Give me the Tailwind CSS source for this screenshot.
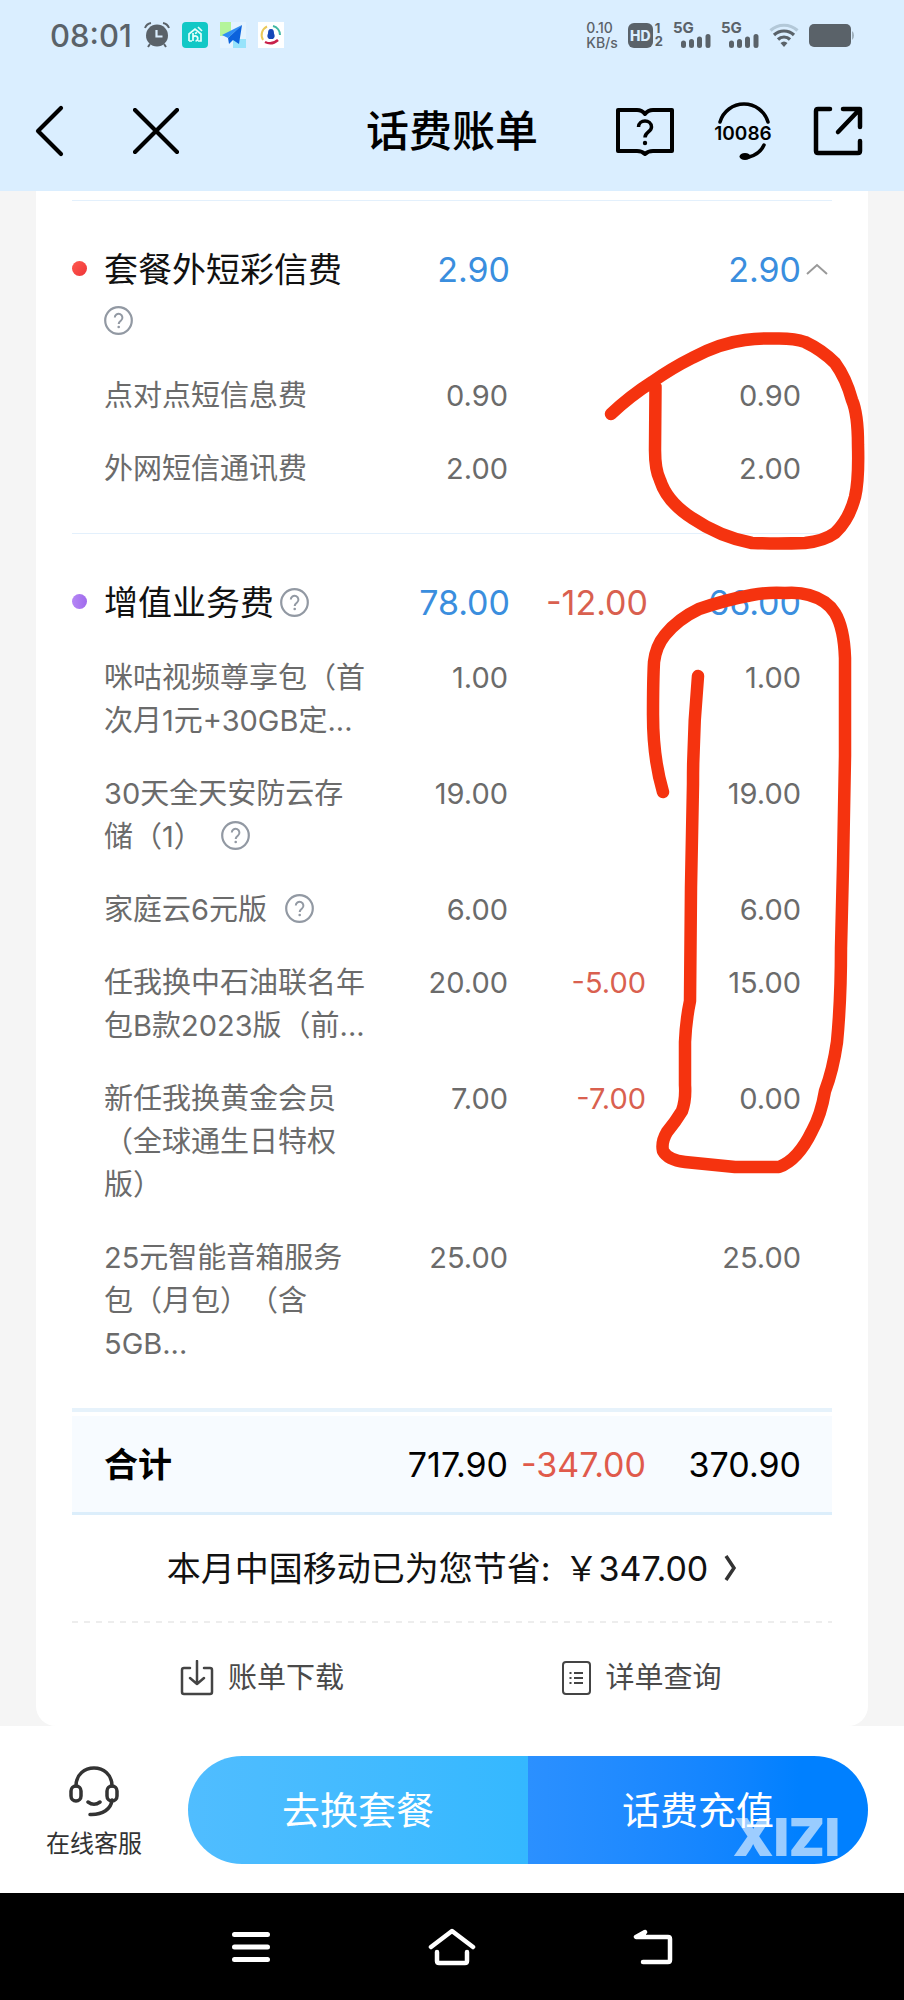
<!DOCTYPE html>
<html lang="zh-CN">
<head>
  <meta charset="UTF-8">
  <meta name="viewport" content="width=device-width, initial-scale=1.0">
  <title>话费账单</title>
  <script src="https://cdn.jsdelivr.net/npm/@tailwindcss/browser@4"></script>
</head>
<body class="relative flex min-h-screen flex-col bg-[#f5f5f5] font-['Inter','Noto_Sans_CJK_SC',sans-serif] [text-spacing-trim:space-all]">

  <!-- Shared icons -->
  <svg class="hidden">
    <symbol id="help" viewBox="0 0 29 29">
      <circle cx="14.5" cy="14.5" r="13.3" fill="none" stroke="#9299a3" stroke-width="2.2"/>
      <path d="M10.8 11.6a3.8 3.8 0 1 1 6.2 2.9c-1.6 1.2-2.3 1.8-2.3 3.6" fill="none" stroke="#9299a3" stroke-width="2"/>
      <circle cx="14.7" cy="21" r="1.3" fill="#9299a3"/>
    </symbol>
    <symbol id="signal" viewBox="0 0 30 14">
      <path d="M2.5 9v2.500M10.500 7.500v4M18.500 5v6.500M27 2.500v9" fill="none" stroke="#5a6269" stroke-width="5" stroke-linecap="round"/>
    </symbol>
  </svg>

  <header class="h-[191px] bg-[#daeeff]">
    <!-- Status bar -->
    <div class="flex h-[70px] items-center justify-between px-[50px] text-[#5a6269]">
      <div class="flex items-center gap-3">
        <span class="text-[31px] font-medium leading-none">08:01</span>
        <svg class="h-[26px] w-[26px]" viewBox="0 0 26 26">
          <circle cx="13" cy="13.500" r="11" fill="#5a6269"/>
          <path d="M1 6a8 8 0 0 1 6-5M25 6a8 8 0 0 0-6-5M6 22l-2 3M20 22l2 3" fill="none" stroke="#5a6269" stroke-width="2"/>
          <path d="M12.500 8v6.500h6" fill="none" stroke="#daeeff" stroke-width="2.200"/>
        </svg>
        <svg class="h-[26px] w-[26px]" viewBox="0 0 26 26">
          <rect width="26" height="26" rx="4" fill="#12c8c6"/>
          <path d="M7 19v-7l6-5 6 5v7h-3M7 19h3M11 11v8M11 15.500a2.500 2.500 0 1 1 2.500 3.500M13 11.500l2-1M16 5l4 4" fill="none" stroke="#e6fffb" stroke-width="1.700"/>
        </svg>
        <svg class="h-[26px] w-[26px]" viewBox="0 0 26 26">
          <rect width="26" height="26" fill="#e4f3ff"/>
          <rect width="11" height="14" fill="#b4f49a"/>
          <rect x="13" y="17" width="13" height="9" fill="#97e3fb"/>
          <path d="M22 3L2 13l6 3z" fill="#2d8df5"/>
          <path d="M22 3L8 16l1 6 4-4 6 4z" fill="#0b62dc"/>
        </svg>
        <svg class="h-[26px] w-[26px]" viewBox="0 0 26 26">
          <rect width="26" height="26" fill="#fff"/>
          <path d="M9 4.500A9.500 9.500 0 0 0 5 18" fill="none" stroke="#eac95a" stroke-width="2"/>
          <path d="M15 4a9 9 0 0 1 7 9" fill="none" stroke="#40b8a4" stroke-width="2"/>
          <path d="M7 20c4 2 9 1.500 13-2" fill="none" stroke="#c8204a" stroke-width="2.500"/>
          <path d="M13 7c2.500 0 3 2 3 4.500 1 2 1 4-1 5.500h-4c-2-1.500-2-3.500-1-5.500C10 9 10.500 7 13 7z" fill="#1647b8"/>
        </svg>
      </div>

      <div class="flex items-center gap-[10px]">
        <div class="text-[14px] font-medium">
          <div class="leading-[15px]">0.10</div>
          <div class="leading-[15px]">KB/s</div>
        </div>
        <div class="flex items-center gap-[2px]">
          <span class="flex h-[25px] w-[25px] items-center justify-center rounded-md bg-[#5a6269] text-[14px] font-extrabold text-[#daeeff]">HD</span>
          <span class="text-[13px] font-bold leading-[13px]">1<br>2</span>
        </div>
        <div class="flex w-[38px] flex-col">
          <span class="text-[15px] font-bold leading-[12px]">5G</span>
          <svg class="h-[14px] w-[30px] self-end"><use href="#signal"/></svg>
        </div>
        <div class="flex w-[38px] flex-col">
          <span class="text-[15px] font-bold leading-[12px]">5G</span>
          <svg class="h-[14px] w-[30px] self-end"><use href="#signal"/></svg>
        </div>
        <svg class="h-[24px] w-[30px]" viewBox="0 0 30 24" fill="none" stroke-width="3.200">
          <path d="M1.500 7.500a20 20 0 0 1 27 0" stroke="#b3c8d8"/>
          <path d="M5 12a14.500 14.500 0 0 1 20 0M9 16.500a8.500 8.500 0 0 1 12 0" stroke="#5a6269"/>
          <path d="M11.500 20q3.500-3 7 0L15 24z" fill="#5a6269"/>
        </svg>
        <svg class="h-[23px] w-[45px]" viewBox="0 0 45 23">
          <rect width="42" height="23" rx="5" fill="#5a6269"/>
          <path d="M43 7q2 1 2 4.500T43 16z" fill="#9fb0bd"/>
        </svg>
      </div>
    </div>

    <!-- App bar -->
    <nav class="grid h-[122px] grid-cols-[1fr_auto_1fr] items-center px-[35px]">
      <div class="flex items-center gap-[68px]">
        <button aria-label="返回">
          <svg class="h-[52px] w-[30px]" viewBox="0 0 30 52"><path d="M26 3L3 26l23 23" fill="none" stroke="#000" stroke-width="4.200" stroke-linecap="round" stroke-linejoin="round"/></svg>
        </button>
        <button aria-label="关闭">
          <svg class="h-[46px] w-[46px]" viewBox="0 0 46 46"><path d="M2 2l42 42M44 2L2 44" fill="none" stroke="#000" stroke-width="4.200" stroke-linecap="round"/></svg>
        </button>
      </div>
      <h1 class="text-[43px] font-medium leading-none text-black">话费账单</h1>
      <div class="flex items-center justify-end gap-[39px] pr-[6px]">
        <button aria-label="帮助">
          <svg class="h-[50px] w-[60px]" viewBox="0 0 60 50" fill="none" stroke="#000" stroke-width="4">
            <path d="M3 4h19q5 0 8 4 3-4 8-4h19v41H38q-5 0-8 3-3-3-8-3H3z" stroke-linejoin="round"/>
            <path d="M23.500 21c0-8 13-8 13 0 0 5-6.500 5-6.500 10.500" stroke-width="3.500"/>
            <circle cx="30" cy="37" r="2.200" fill="#000" stroke="none"/>
          </svg>
        </button>
        <button aria-label="10086 客服">
          <svg class="h-[58px] w-[60px]" viewBox="0 0 60 58">
            <path d="M6 20a25 25 0 0 1 48 0M50 43q-4 9-15 12" fill="none" stroke="#000" stroke-width="3.500" stroke-linecap="round"/>
            <ellipse cx="31" cy="54.500" rx="5.500" ry="3.500" fill="#000"/>
            <text x="29" y="38" text-anchor="middle" class="text-[19px] font-semibold">10086</text>
          </svg>
        </button>
        <button aria-label="分享">
          <svg class="h-[50px] w-[50px]" viewBox="0 0 50 50" fill="none" stroke="#000" stroke-width="4.500" stroke-linecap="round" stroke-linejoin="round">
            <path d="M17 3H5q-2 0-2 2v40q0 2 2 2h40q2 0 2-2V35M30 3h17v18M46 4L25 26"/>
          </svg>
        </button>
      </div>
    </nav>
  </header>

  <main class="mx-9 rounded-b-[20px] bg-white px-9 pt-[9px]">
    <table class="w-full table-fixed border-separate border-spacing-0 text-right text-[29px] leading-[43px] text-[#6b6b6b]">
      <colgroup>
        <col>
        <col class="w-[138px]">
        <col class="w-[138px]">
        <col class="w-[153px]">
        <col class="w-[31px]">
      </colgroup>

      <tbody class="align-top">
        <tr class="text-[34px] leading-[51px] text-[#3a8ede] *:border-t *:border-[#e3f0fc] *:pt-[43px] *:pb-[13px]">
          <th class="text-left font-normal text-[#111]" scope="rowgroup">
            <div class="flex">
              <span class="mt-[17px] mr-[17px] h-[15px] w-[15px] shrink-0 rounded-full bg-linear-to-br from-[#ff5a50] to-[#ee3338]"></span>
              <div>套餐外短彩信费 <button class="align-[-2px]" aria-label="说明"><svg class="h-[29px] w-[29px]"><use href="#help"/></svg></button></div>
            </div>
          </th>
          <td>2.90</td>
          <td></td>
          <td>2.90</td>
          <td>
            <button class="flex h-[49px] w-full items-center justify-center" aria-label="收起">
              <svg class="h-[12px] w-[22px]" viewBox="0 0 22 12"><path d="M1 11L11 2l10 9" fill="none" stroke="#999" stroke-width="2"/></svg>
            </button>
          </td>
        </tr>
        <tr class="*:py-[15px]">
          <th class="pl-8 text-left font-normal" scope="row">点对点短信息费</th>
          <td class="pr-[2px]">0.90</td><td></td><td>0.90</td><td></td>
        </tr>
        <tr class="*:pt-[15px] *:pb-[43px]">
          <th class="pl-8 text-left font-normal" scope="row">外网短信通讯费</th>
          <td class="pr-[2px]">2.00</td><td></td><td>2.00</td><td></td>
        </tr>
      </tbody>

      <tbody class="align-top">
        <tr class="text-[34px] leading-[51px] text-[#3a8ede] *:border-t *:border-[#e3f0fc] *:pt-[43px] *:pb-[13px]">
          <th class="text-left font-normal text-[#111]" scope="rowgroup">
            <div class="flex">
              <span class="mt-[17px] mr-[17px] h-[15px] w-[15px] shrink-0 rounded-full bg-linear-to-r from-[#b586f5] to-[#a06bec]"></span>
              <div>增值业务费<button class="ml-[6px] align-[-2px]" aria-label="说明"><svg class="h-[29px] w-[29px]"><use href="#help"/></svg></button></div>
            </div>
          </th>
          <td>78.00</td>
          <td class="text-[#d9604f]">-12.00</td>
          <td>66.00</td>
          <td></td>
        </tr>
        <tr class="*:py-[15px]">
          <th class="pr-1 pl-8 text-left font-normal" scope="row">咪咕视频尊享包（首次月1元+30GB定...</th>
          <td class="pr-[2px]">1.00</td><td></td><td>1.00</td><td></td>
        </tr>
        <tr class="*:py-[15px]">
          <th class="pr-1 pl-8 text-left font-normal" scope="row">30天全天安防云存储（1）<button class="ml-[18px] align-[-3px]" aria-label="说明"><svg class="h-[29px] w-[29px]"><use href="#help"/></svg></button></th>
          <td class="pr-[2px]">19.00</td><td></td><td>19.00</td><td></td>
        </tr>
        <tr class="*:py-[15px]">
          <th class="pr-1 pl-8 text-left font-normal" scope="row">家庭云6元版<button class="ml-[18px] align-[-3px]" aria-label="说明"><svg class="h-[29px] w-[29px]"><use href="#help"/></svg></button></th>
          <td class="pr-[2px]">6.00</td><td></td><td>6.00</td><td></td>
        </tr>
        <tr class="*:py-[15px]">
          <th class="pr-1 pl-8 text-left font-normal" scope="row">任我换中石油联名年包B款2023版（前...</th>
          <td class="pr-[2px]">20.00</td><td class="pr-[2px] text-[#d9604f]">-5.00</td><td>15.00</td><td></td>
        </tr>
        <tr class="*:py-[15px]">
          <th class="pr-1 pl-8 text-left font-normal" scope="row">新任我换黄金会员（全球通生日特权版）</th>
          <td class="pr-[2px]">7.00</td><td class="pr-[2px] text-[#d9604f]">-7.00</td><td>0.00</td><td></td>
        </tr>
        <tr class="*:border-b-4 *:border-[#e6f2fb] *:pt-[15px] *:pb-[43px]">
          <th class="pr-1 pl-8 text-left font-normal" scope="row">25元智能音箱服务包（月包）（含5GB...</th>
          <td class="pr-[2px]">25.00</td><td></td><td>25.00</td><td></td>
        </tr>
      </tbody>

      <tfoot>
        <tr class="h-[103px] text-[34px] text-black *:border-t-4 *:border-b-3 *:border-t-white *:border-b-[#dceefb] *:bg-[#f7fbff]">
          <th class="pl-8 text-left font-bold" scope="row">合计</th>
          <td class="pr-[2px]">717.90</td>
          <td class="pr-[2px] text-[#e05a4b]">-347.00</td>
          <td>370.90</td>
          <td></td>
        </tr>
      </tfoot>
    </table>

    <a href="#" class="flex h-[106px] items-center justify-center text-[34px] text-[#111]">
      <span>本月中国移动已为您节省:</span>
      <span class="ml-[14px]">￥347.00</span>
      <svg class="ml-4 h-[26px] w-[13px]" viewBox="0 0 13 26"><path d="M2 1l8 12-8 12" fill="none" stroke="#333" stroke-width="3.500"/></svg>
    </a>

    <div class="h-[2px] bg-[repeating-linear-gradient(90deg,#ededed_0_6px,transparent_6px_12px)]"></div>

    <div class="grid h-[103px] grid-cols-2 pt-[6px] text-[29px] text-[#4a4a4a]">
      <a href="#" class="flex items-center justify-center gap-[14px]">
        <svg class="h-[36px] w-[34px]" viewBox="0 0 34 36" fill="none" stroke="#444" stroke-width="2.500" stroke-linecap="round" stroke-linejoin="round">
          <path d="M10 8H4Q2 8 2 10v22q0 2 2 2h26q2 0 2-2V10q0-2-2-2h-6M17 1v23M10 18l7 6 7-6"/>
        </svg>
        账单下载
      </a>
      <a href="#" class="flex items-center justify-center gap-[14px]">
        <svg class="h-[34px] w-[29px]" viewBox="0 0 29 34" fill="none" stroke="#444" stroke-width="2">
          <rect x="1" y="1" width="27" height="32" rx="3"/>
          <path d="M12 12h9M12 17h9M12 22h9M7.500 12h2M7.500 17h2M7.500 22h2"/>
        </svg>
        详单查询
      </a>
    </div>
  </main>

  <!-- Bottom actions -->
  <div class="flex h-[167px] items-start bg-white pt-[30px] pr-9">
    <a href="#" class="flex w-[188px] shrink-0 flex-col items-center pt-[10px] text-[24px] leading-[36px] text-[#333]">
      <svg class="mb-[9px] h-[51px] w-[50px]" viewBox="0 0 50 51" fill="none" stroke="#333" stroke-width="3.500" stroke-linecap="round">
        <path d="M7 20C7-4 43-4 43 20M43 34c-1 9-9 15-22 14.500M19 36q6 4.500 12 0"/>
        <rect x="2" y="20" width="10" height="15" rx="5"/>
        <rect x="38" y="20" width="10" height="15" rx="5"/>
      </svg>
      在线客服
    </a>
    <div class="relative grid h-[108px] flex-1 grid-cols-2 text-[38px] text-white">
      <button class="rounded-l-full bg-linear-to-r from-[#50bdff] to-[#34b8ff]">去换套餐</button>
      <button class="rounded-r-full bg-linear-to-r from-[#2b90ff] to-[#0080ff] to-80%">话费充值</button>
      <span class="pointer-events-none absolute right-[28px] bottom-0 text-[52px] font-black leading-[52px] text-white/60">XIZI</span>
    </div>
  </div>

  <!-- System navigation -->
  <nav class="grid min-h-[106px] flex-1 grid-cols-3 place-items-center bg-black px-[150px]">
    <button aria-label="最近任务">
      <svg class="h-[32px] w-[38px]" viewBox="0 0 38 32"><path d="M2.500 3.500h33M2.500 16h33M2.500 28.500h33" stroke="#fff" stroke-width="5" stroke-linecap="round"/></svg>
    </button>
    <button aria-label="主屏幕">
      <svg class="h-[38px] w-[48px]" viewBox="0 0 48 38" fill="none" stroke="#fff" stroke-width="4.500" stroke-linecap="round" stroke-linejoin="round"><path d="M3 19L24 3l21 16M9 24v9q0 2 2 2h26q2 0 2-2v-9"/></svg>
    </button>
    <button aria-label="返回上一页">
      <svg class="h-[36px] w-[40px]" viewBox="0 0 40 36" fill="none" stroke="#fff" stroke-width="4.500" stroke-linecap="round" stroke-linejoin="round"><path d="M12 3L3 8h32q2 0 2 2v21q0 2-2 2H10"/><path d="M12 3v5H3z" fill="#fff" stroke-width="2"/></svg>
    </button>
  </nav>

  <!-- Hand-drawn marks over the bill -->
  <svg class="pointer-events-none absolute top-0 right-0 h-[1200px] w-[304px]" viewBox="600 0 304 1200" fill="none" stroke="#f5330f" stroke-width="12.500" stroke-linecap="round" stroke-linejoin="round">
    <path d="M611 414Q630 396 652 382Q672 368 692 358Q720 343 745 340Q760 338 775 338.500Q794 338 805 342Q822 350 835 363Q846 378 852 400Q858 414 858 445Q859 480 855 497Q849 520 835 533Q824 541 805 543Q778 544 752 543Q720 537 692 518Q667 502 660 480Q655 470 655 450L655.500 387"/>
    <path d="M663 792Q653 758 653 715Q653 680 654 662Q656 646 665 635Q678 619 699 609Q725 600 752 595Q768 592 785 593Q799 592 809 595Q827 600 835 613Q844 628 845 658L845 756L843 866L841 948Q841 1000 837 1042Q833 1070 825 1091Q821 1115 812 1131Q798 1160 779 1167L735 1167Q715 1165 685 1162Q668 1160 663 1151Q661 1142 667 1132Q676 1121 682 1111Q686 1100 685 1085L685 1042Q686 1020 690 1001L691 887L693 784Q693 730 698 676"/>
  </svg>

</body>
</html>
